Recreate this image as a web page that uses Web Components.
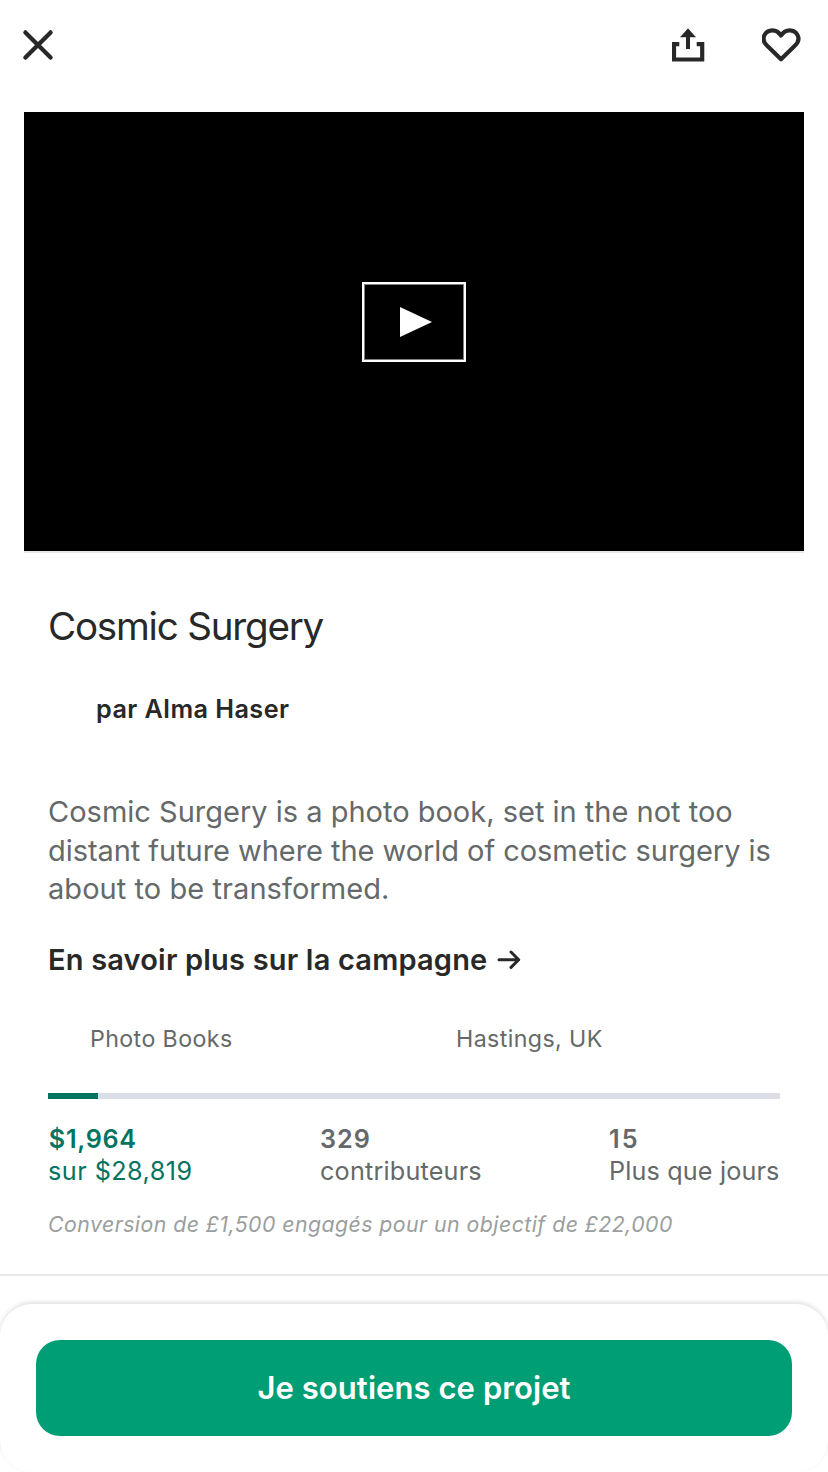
<!DOCTYPE html>
<html lang="fr">
<head>
<meta charset="utf-8">
<title>Cosmic Surgery</title>
<style>
html,body{margin:0;padding:0;background:#fff}
body{font-family:Inter,"Liberation Sans",sans-serif;color:#282828;width:828px;height:1472px;overflow:hidden}
</style>
</head>
<body>
<project-page></project-page>
<script>
const define = (name, html) => customElements.define(name, class extends HTMLElement {
  constructor() {
    super();
    const t = document.createElement('template');
    t.innerHTML = html;
    this.attachShadow({ mode: 'open' }).append(t.content.cloneNode(true));
  }
});

define('project-toolbar', `
<style>
:host{display:flex;align-items:center;height:112px;padding:0 26px 22px 22px;box-sizing:border-box}
svg{display:block}
.share{margin-left:auto;margin-right:56px}
</style>
<svg width="32" height="32" viewBox="0 0 32 32" fill="none" stroke="#282828" stroke-width="4.300" stroke-linecap="round"><path d="M3.400 3.400 28.600 28.600M28.600 3.400 3.400 28.600"/></svg>
<svg class="share" width="34" height="34" viewBox="0 0 34 34"><path d="M7.300 16.200H2V31.500H30.200V16.200H24.700" fill="none" stroke="#282828" stroke-width="4.200"/><path d="M16 .2 24 9.300H18V21H14V9.300H8Z" fill="#282828"/></svg>
<svg width="40" height="36" viewBox="0 0 40 36" fill="none" stroke="#282828" stroke-width="4.200" stroke-linejoin="round"><path d="M19 32.300 5.200 18.800C-2.500 11.500 3.500 3.400 10.500 3.400C14.500 3.400 17 5.500 19 8.600C21 5.500 23.500 3.400 27.500 3.400C34.500 3.400 40.500 11.500 32.800 18.800Z"/></svg>
`);

define('video-player', `
<style>
:host{display:flex;align-items:center;justify-content:center;height:439px;margin:0 24px;background:#000;border-bottom:2px solid #e8e8e8}
.play{width:104px;height:80px;box-sizing:border-box;border:2px solid #fff;box-shadow:inset 0 0 0 1px #808080;display:flex;align-items:center;justify-content:center;margin-bottom:19px}
svg{display:block;margin-left:4px}
</style>
<div class="play"><svg width="32" height="30" viewBox="0 0 32 30"><path d="M0 0 32 15 0 30Z" fill="#fff"/></svg></div>
`);

define('creator-name', `
<style>:host{display:block;margin:43px 0 0 48px;font-size:25.2px;font-weight:600;line-height:32px;letter-spacing:.45px}</style>
<slot></slot>
`);

define('campaign-link', `
<style>
:host{display:flex;align-items:center;margin-top:33px;font-size:29px;font-weight:600;line-height:36px;letter-spacing:.18px}
svg{display:block;margin-left:10px}
</style>
<slot></slot>
<svg width="24" height="20" viewBox="0 0 24 20" fill="none" stroke="#282828" stroke-width="3" stroke-linecap="round" stroke-linejoin="round"><path d="M2 9.700H21.700M14 2 21.700 9.700 14 17.400"/></svg>
`);

define('progress-bar', `
<style>
:host{display:block;height:6px;background:#dcdee7}
div{width:50px;height:6px;background:#037362}
</style><div></div>
`);

define('stat-item', `
<style>
:host{display:block;font-size:25.2px;line-height:32px;color:#656969;white-space:nowrap;letter-spacing:var(--label-spacing,.2px)}
:host([funded]){color:#037362}
b{display:block;font-weight:600;letter-spacing:var(--value-spacing,.8px);padding-left:var(--value-inset,0)}
</style>
<b><slot name="value"></slot></b><slot></slot>
`);

define('pledge-sheet', `
<style>
:host{display:block;height:168px;padding:36px;box-sizing:border-box;border-radius:32px;background:#fff;box-shadow:0 -2px 4px rgba(0,0,0,.12)}
button{display:block;width:100%;height:96px;border:0;border-radius:24px;background:#009e74;color:#fff;font:600 31px/96px Inter,sans-serif;letter-spacing:.07px;padding:0}
</style>
<button><slot></slot></button>
`);

define('project-page', `
<style>
:host{display:flex;flex-direction:column;height:1472px}
main{padding:49px 48px 0;height:672px}
h1{margin:0;font-size:38.6px;line-height:48px;font-weight:400;letter-spacing:-1.22px}
p{margin:0}
.blurb{margin-top:68px;font-size:29px;line-height:38.5px;color:#656969;white-space:nowrap}
.blurb span:nth-of-type(2){letter-spacing:-.052px}
.blurb span:nth-of-type(3){letter-spacing:.06px}
.meta{display:grid;grid-template-columns:366px 1fr;padding-left:42px;margin-top:47px;font-size:23.2px;line-height:28px;letter-spacing:.4px;color:#656969}
progress-bar{margin-top:40px}
.stats{display:grid;grid-template-columns:272px 289px 1fr;margin-top:24px}
.note{margin-top:24px;font-size:21.300px;line-height:26px;font-style:italic;letter-spacing:.45px;color:#9b9e9e;white-space:nowrap}
hr{margin:0 0 28px;border:0;height:2px;background:#e8e8e8;flex:none}
</style>
<project-toolbar></project-toolbar>
<video-player></video-player>
<main>
<h1>Cosmic Surgery</h1>
<creator-name>par Alma Haser</creator-name>
<p class="blurb"><span>Cosmic Surgery is a photo book, set in the not too</span><br><span>distant future where the world of cosmetic surgery is</span><br><span>about to be transformed.</span></p>
<campaign-link>En savoir plus sur la campagne</campaign-link>
<div class="meta"><span>Photo Books</span><span>Hastings, UK</span></div>
<progress-bar></progress-bar>
<div class="stats">
<stat-item funded style="--value-spacing:.7px;--label-spacing:.47px;--value-inset:.8px"><span slot="value">$1,964</span>sur $28,819</stat-item>
<stat-item style="--value-spacing:.99px"><span slot="value">329</span>contributeurs</stat-item>
<stat-item style="--value-spacing:2.2px;--label-spacing:.15px"><span slot="value">15</span>Plus que jours</stat-item>
</div>
<p class="note">Conversion de £1,500 engagés pour un objectif de £22,000</p>
</main>
<hr>
<pledge-sheet>Je soutiens ce projet</pledge-sheet>
`);
</script>
</body>
</html>
